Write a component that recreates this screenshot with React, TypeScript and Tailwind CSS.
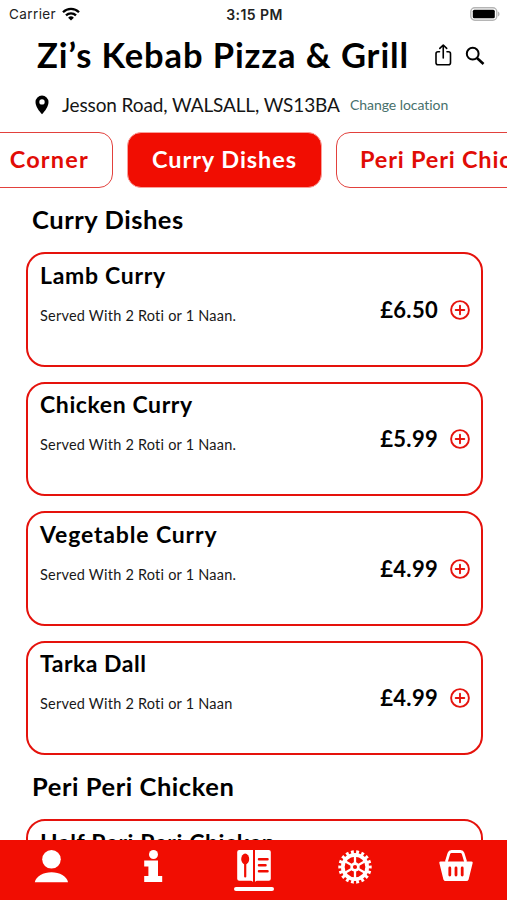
import { ReactNode } from "react";

interface Item {
  name: string;
  description: string;
  price: string;
  nameClass: string;
}

const curries: Item[] = [
  { name: "Lamb Curry", description: "Served With 2 Roti or 1 Naan.", price: "£6.50", nameClass: "tracking-[0.7px]" },
  { name: "Chicken Curry", description: "Served With 2 Roti or 1 Naan.", price: "£5.99", nameClass: "tracking-[0.6px]" },
  { name: "Vegetable Curry", description: "Served With 2 Roti or 1 Naan.", price: "£4.99", nameClass: "tracking-[0.85px]" },
  { name: "Tarka Dall", description: "Served With 2 Roti or 1 Naan", price: "£4.99", nameClass: "tracking-[0.5px]" },
];

const StatusBar = () => (
  <div className="grid h-7 shrink-0 grid-cols-3 items-center pl-[9px] pr-[7px] font-['Inter',sans-serif] text-[13.5px] text-[#222]">
    <div className="flex items-center gap-[6px]">
      <span className="tracking-[0.4px]">Carrier</span>
      <svg width="18" height="14" viewBox="0 0 18 14" fill="none" stroke="#000" strokeWidth="2.3">
        <path d="M1 5.2a11.4 11.4 0 0 1 16 0" />
        <path d="M4 8.4a7.1 7.1 0 0 1 10 0" />
        <path d="M9 13.6 6.1 10.7a4.1 4.1 0 0 1 5.8 0z" fill="#000" stroke="none" />
      </svg>
    </div>
    <span className="text-center text-[14px] font-semibold tracking-[0.45px]">3:15 PM</span>
    <svg className="justify-self-end" width="31" height="15" viewBox="0 0 31 15">
      <rect x="1.8" y="0.8" width="26" height="12.4" rx="4" fill="#fff" stroke="#b5b5b5" strokeWidth="1.4" />
      <rect x="3.8" y="2.8" width="22" height="8.4" rx="1.5" />
      <path d="M29 4.5v5q1.6-.8 1.6-2.5T29 4.5z" fill="#b5b5b5" />
    </svg>
  </div>
);

const Header = () => (
  <header className="shrink-0">
    <div className="flex h-[54px] items-center pl-[37px]">
      <h1 className="w-[396px] whitespace-nowrap text-[34.5px] font-bold leading-none tracking-[0.9px]">
        Zi’s Kebab Pizza &amp; Grill
      </h1>
      <svg width="20" height="24" viewBox="0 0 20 24" fill="none" stroke="#000" strokeWidth="1.6" strokeLinecap="round" strokeLinejoin="round">
        <path d="M6.5 8.7H5a2 2 0 0 0-2 2v9.1a2 2 0 0 0 2 2h10.5a2 2 0 0 0 2-2v-9.1a2 2 0 0 0-2-2H14" />
        <path d="M10.25 15V2.2M6.8 5.4l3.45-3.4 3.45 3.4" />
      </svg>
      <svg className="ml-[12px] mt-0.5" width="20" height="20" viewBox="0 0 20 20" fill="none" stroke="#000" strokeWidth="2">
        <circle cx="7.7" cy="7.7" r="5.9" />
        <path d="m12 12 6.5 6" strokeWidth="2.6" />
      </svg>
    </div>
    <div className="flex h-[45px] items-center pl-[35px]">
      <svg width="14" height="20" viewBox="0 0 14 20">
        <path fillRule="evenodd" d="M7 .5A6.5 6.5 0 0 0 .5 7C.5 11.5 4 16 7 19.3 10 16 13.5 11.5 13.5 7A6.5 6.5 0 0 0 7 .5zM7 4.2a2.7 2.7 0 1 1 0 5.4 2.7 2.7 0 0 1 0-5.4z" />
      </svg>
      <span className="ml-[13px] w-[288px] whitespace-nowrap text-[19px] leading-none tracking-[-0.12px] text-[#151515]">
        Jesson Road, WALSALL, WS13BA
      </span>
      <a className="whitespace-nowrap text-[14px] leading-none tracking-[-0.05px] text-[#47706b]">Change location</a>
    </div>
  </header>
);

const Tabs = () => (
  <div className="mt-[5px] flex h-[56px] shrink-0 gap-[14px] overflow-hidden text-[23.5px] font-bold text-[#e10c06]">
    <button className="flex w-[133px] shrink-0 -ml-5 items-center justify-end rounded-[14px] border border-[#e2413d] pr-[23px]">
      <span className="tracking-[1.2px]">Corner</span>
    </button>
    <button className="flex w-[195px] shrink-0 items-center justify-center whitespace-nowrap rounded-[14px] border border-[#f9a09b] bg-[#f10d02] text-white">
      <span className="tracking-[0.95px]">Curry Dishes</span>
    </button>
    <button className="flex w-[260px] shrink-0 items-center whitespace-nowrap rounded-[14px] border border-[#e2413d] pl-[23px]">
      <span className="tracking-[0.8px]">Peri Peri Chicken</span>
    </button>
  </div>
);

const Card = ({ item }: { item: Item }) => (
  <div className="flex h-[114.5px] w-[457px] shrink-0 items-center rounded-[19px] border-2 border-[#e5120c] pl-3 pr-[11px]">
    <div className="h-full flex-1 whitespace-nowrap pt-[6.5px]">
      <h3 className={`text-[23px] font-bold leading-7 ${item.nameClass}`}>{item.name}</h3>
      <p className="mt-[17px] text-[14.5px] leading-5 tracking-[0.22px] text-[#181818]">{item.description}</p>
    </div>
    <span className="pt-px text-[22px] font-bold leading-none tracking-[0.3px]">{item.price}</span>
    <svg className="ml-3 mt-px" width="20" height="20" viewBox="0 0 20 20" fill="none" stroke="#e5150f" strokeWidth="1.9">
      <circle cx="10" cy="10" r="8.9" />
      <path d="M10 5.7v8.6M5.7 10h8.6" strokeLinecap="round" />
    </svg>
  </div>
);

const Section = ({ title, children }: { title: string; children: ReactNode }) => (
  <section className="shrink-0">
    <h2 className="flex h-[64.2px] items-center pb-0.5 pl-[32px] text-[25.5px] font-bold tracking-[0.55px]">{title}</h2>
    <div className="flex flex-col gap-[15px] pl-[26px]">{children}</div>
  </section>
);

const Navbar = () => (
  <nav className="flex h-[60px] shrink-0 bg-[#f10d02] text-white">
    <div className="flex flex-1 justify-center pt-[10px]">
      <svg width="34" height="34" viewBox="0 0 34 34" fill="currentColor">
        <circle cx="17.5" cy="9.3" r="9.3" />
        <path d="M.8 32.3C1.8 26.3 9.5 22.3 17.5 22.3S33 26.3 34 32.3z" />
      </svg>
    </div>
    <div className="flex flex-1 justify-center pl-px pt-[10px]">
      <svg width="20" height="34" viewBox="0 0 20 34" fill="currentColor">
        <circle cx="10.5" cy="4.5" r="4.5" />
        <path d="M1.2 10.5h13.8v15.500h4.200v6H1.200v-6h4.200v-9.500H1.200z" />
      </svg>
    </div>
    <div className="flex flex-1 flex-col items-center pt-[10px]">
      <svg width="34" height="32" viewBox="0 0 34 32" fill="currentColor">
        <path d="M2.2 0H16v32q-.7-1.3-2.4-1.3H2.2a2 2 0 0 1-2-2V2a2 2 0 0 1 2-2z" />
        <path d="M31.8 0H18v32q.7-1.3 2.4-1.3h11.4a2 2 0 0 0 2-2V2a2 2 0 0 0-2-2z" />
        <ellipse cx="8.2" cy="9" rx="4" ry="5.4" fill="#f10d02" />
        <path d="M8.2 13v13.5" stroke="#f10d02" strokeWidth="2.2" strokeLinecap="round" />
        <path d="M22 9.2h8.5M22 15.2h6.5M22 21.3h8.5" stroke="#f10d02" strokeWidth="2.5" strokeLinecap="round" />
      </svg>
      <span className="mt-[5px] h-[3.5px] w-[40px] rounded-full bg-white" />
    </div>
    <div className="flex flex-1 justify-center pt-[10px]">
      <svg width="34" height="34" viewBox="0 0 34 34" fill="none" stroke="currentColor">
        <circle cx="17" cy="17" r="15" strokeWidth="3.4" pathLength="180" strokeDasharray="5.4 4.6" strokeDashoffset="2.7" />
        <circle cx="17" cy="17" r="12.2" strokeWidth="3.7" />
        <path d="M17 5v24M6.6 11l20.8 12M27.4 11 6.6 23" strokeWidth="2.3" />
        <circle cx="17" cy="17" r="4.7" fill="currentColor" stroke="none" />
        <circle cx="17" cy="17" r="2.1" fill="#f10d02" stroke="none" />
      </svg>
    </div>
    <div className="flex flex-1 justify-center pt-[10px]">
      <svg width="34" height="34" viewBox="0 0 34 34" fill="currentColor">
        <path d="M7.3 12 10 3.2Q10.6 1.5 12.5 1.5h9Q23.4 1.5 24 3.2L26.7 12" fill="none" stroke="currentColor" strokeWidth="2.8" />
        <path d="M1.7 11.4h30.6a1.4 1.4 0 0 1 1.3 1.8l-4 16.2a2.4 2.4 0 0 1-2.3 1.7H6.7a2.4 2.4 0 0 1-2.3-1.7L.4 13.2a1.4 1.4 0 0 1 1.3-1.8z" />
        <path d="M10.8 18v7M17 18v7M23.2 18v7" stroke="#f10d02" strokeWidth="2.8" strokeLinecap="round" />
      </svg>
    </div>
  </nav>
);

export default function App() {
  return (
    <div className="flex h-[900px] w-[507px] flex-col overflow-hidden bg-white font-['Lato',sans-serif] text-black">
      <StatusBar />
      <Header />
      <Tabs />
      <main className="min-h-0 flex-1 overflow-hidden">
        <Section title="Curry Dishes">
          {curries.map((item) => (
            <Card key={item.name} item={item} />
          ))}
        </Section>
        <Section title="Peri Peri Chicken">
          <Card
            item={{ name: "Half Peri Peri Chicken", description: "", price: "", nameClass: "tracking-[0.6px]" }}
          />
        </Section>
      </main>
      <Navbar />
    </div>
  );
}
